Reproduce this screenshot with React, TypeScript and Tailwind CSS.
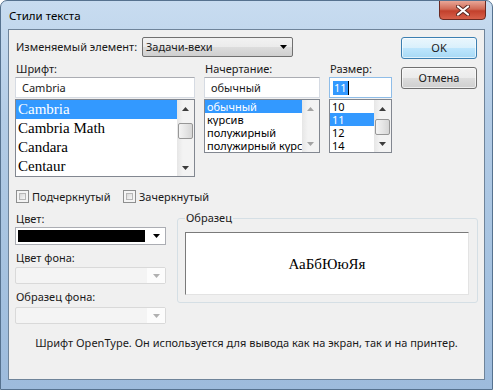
import React from "react";

const Tri = ({ up = false, color = "#000", w = 7, h = 4 }: { up?: boolean; color?: string; w?: number; h?: number }) => (
  <svg width={w} height={h} viewBox={`0 0 ${w} ${h}`}>
    <polygon points={up ? `0,${h} ${w / 2},0 ${w},${h}` : `0,0 ${w},0 ${w / 2},${h}`} fill={color} />
  </svg>
);

const ScrollBar = ({ thumbTop, disabled = false }: { thumbTop?: number; disabled?: boolean }) => (
  <div className="flex w-[17px] shrink-0 flex-col bg-[linear-gradient(to_right,#e6e6e6,#f3f3f3_35%,#f3f3f3)]">
    <div className="flex h-[17px] items-center justify-center">
      <Tri up color={disabled ? "#a3a3a3" : "#3c3c3c"} />
    </div>
    <div className="relative flex-1">
      {thumbTop !== undefined && (
        <div
          className="absolute left-[1px] right-[1px] h-[16px] rounded-[2px] border border-[#979797] bg-[linear-gradient(to_right,#f4f4f4,#e6e6e6_50%,#d6d6d6)]"
          style={{ top: thumbTop }}
        />
      )}
    </div>
    <div className="flex h-[17px] items-center justify-center">
      <Tri color={disabled ? "#a3a3a3" : "#3c3c3c"} />
    </div>
  </div>
);

const ListBox = ({
  items,
  selected,
  itemH,
  className,
  itemClass,
  thumbTop,
  disabled,
}: {
  items: string[];
  selected: number;
  itemH: string;
  className: string;
  itemClass: string;
  thumbTop?: number;
  disabled?: boolean;
}) => (
  <div className={`mt-[1px] flex border border-[#828790] bg-white ${className}`}>
    <div className="min-w-0 flex-1 overflow-hidden">
      {items.map((it, i) => (
        <div
          key={it}
          className={`${itemH} overflow-hidden whitespace-nowrap pl-[2px] ${itemClass} ${
            i === selected ? "bg-[#3399ff] text-white" : "text-black"
          }`}
        >
          {it}
        </div>
      ))}
    </div>
    <ScrollBar thumbTop={thumbTop} disabled={disabled} />
  </div>
);

const TextBox = ({ children, focused = false }: { children: React.ReactNode; focused?: boolean }) => (
  <div
    className={`flex h-[21px] items-center border bg-white pl-[6px] ${
      focused ? "border-[#8fbde8]" : "border-[#d6dbe3] border-t-[#abadb3]"
    }`}
  >
    {children}
  </div>
);

const Check = ({ label }: { label: string }) => (
  <div className="flex items-center gap-[3px]">
    <div className="h-[13px] w-[13px] border border-[#8e8f8f] bg-[#f4f4f4] p-[2px]">
      <div className="h-full w-full border border-[#b6b6b6] bg-[linear-gradient(135deg,#d8d8d8,#f7f7f7)]" />
    </div>
    <span>{label}</span>
  </div>
);

const DisabledCombo = () => (
  <div className="flex h-[17px] rounded-[2px] border border-[#d9d9d9] bg-[#f4f4f4]">
    <div className="flex-1" />
    <div className="flex w-[18px] items-center justify-center bg-[#fcfcfc]">
      <Tri color="#b0b0b0" />
    </div>
  </div>
);

export default function App() {
  return (
    <div className="relative h-[390px] w-[493px] overflow-hidden rounded-t-[7px] border border-[#56728f] bg-[linear-gradient(180deg,#c8dcf0,#b3cce6_30%,#a5c2e0_70%,#9dbbdc)] font-['Noto_Sans',sans-serif] text-[11px] leading-[16px] text-[#1a1a1a]">
      {/* title bar */}
      <div className="flex h-[28px] items-center pl-[8px] pt-[1px] text-[11.5px] text-black">Стили текста</div>

      {/* close button */}
      <div className="absolute right-[6px] top-[-1px] flex h-[20px] w-[47px] items-center justify-center rounded-b-[4px] border border-[#6b2a22] bg-[linear-gradient(180deg,#e9a797,#d06a55_45%,#c2402c_55%,#d7604a)]">
        <svg width="14" height="11" viewBox="0 0 14 11">
          <path d="M2 1.5 L12 9.5 M12 1.5 L2 9.5" stroke="#5a2a24" strokeWidth="4" strokeLinecap="round" />
          <path d="M2 1.5 L12 9.5 M12 1.5 L2 9.5" stroke="#ffffff" strokeWidth="2.2" strokeLinecap="round" />
        </svg>
      </div>

      {/* client area */}
      <div className="mx-[7px] h-[351px] border border-[#6f849a] bg-[#f0f0f0]">
        <div className="pl-[6px] pt-[7px]">
          <div className="flex">
            <div className="w-[377px]">
              {/* element row */}
              <div className="flex h-[20px] items-center">
                <span className="w-[127px] whitespace-nowrap pl-[1px]">Изменяемый элемент:</span>
                <div className="flex h-[20px] w-[151px] items-center justify-between rounded-[2px] border border-[#707070] bg-[linear-gradient(180deg,#f2f2f2,#ebebeb_50%,#dddddd_50%,#cfcfcf)] pl-[3px] pr-[5px]">
                  <span>Задачи-вехи</span>
                  <Tri />
                </div>
              </div>

              {/* font / style / size */}
              <div className="mt-[4px] flex gap-[9px]">
                <div className="w-[180px]">
                  <div className="h-[16px] pl-[1px]">Шрифт:</div>
                  <TextBox>Cambria</TextBox>
                  <ListBox
                    items={["Cambria", "Cambria Math", "Candara", "Centaur"]}
                    selected={0}
                    itemH="h-[19px] leading-[19px]"
                    itemClass="font-['Liberation_Serif',serif] text-[15px]"
                    className="h-[78px]"
                    thumbTop={6}
                  />
                </div>
                <div className="w-[116px]">
                  <div className="h-[16px] pl-[1px]">Начертание:</div>
                  <TextBox>обычный</TextBox>
                  <ListBox
                    items={["обычный", "курсив", "полужирный", "полужирный курсив"]}
                    selected={0}
                    itemH="h-[13px] leading-[13px]"
                    itemClass=""
                    className="h-[54px]"
                    disabled
                  />
                </div>
                <div className="w-[63px]">
                  <div className="h-[16px] pl-[1px]">Размер:</div>
                  <TextBox focused>
                    <span className="-ml-[3px] bg-[#3399ff] px-[1px] leading-[14px] text-white">11</span>
                    <span className="h-[14px] w-[1px] bg-black" />
                  </TextBox>
                  <ListBox
                    items={["10", "11", "12", "14"]}
                    selected={1}
                    itemH="h-[13px] leading-[13px]"
                    itemClass=""
                    className="h-[54px]"
                    thumbTop={2}
                  />
                </div>
              </div>
            </div>

            {/* buttons */}
            <div className="ml-[9px] flex w-[76px] flex-col gap-[8px]">
              <div className="flex h-[22px] items-center justify-center rounded-[3px] border border-[#3c7fb1] bg-[linear-gradient(180deg,#eaf6fd,#d9f0fc_50%,#bee6fd_50%,#a7d9f5)] shadow-[inset_0_0_0_1px_#ffffffa0]">
                OK
              </div>
              <div className="flex h-[22px] items-center justify-center rounded-[3px] border border-[#707070] bg-[linear-gradient(180deg,#f2f2f2,#ebebeb_50%,#dddddd_50%,#cfcfcf)] shadow-[inset_0_0_0_1px_#ffffffa0]">
                Отмена
              </div>
            </div>
          </div>

          {/* checkboxes */}
          <div className="mt-[13px] flex h-[13px] items-center pl-[1px]">
            <div className="w-[107px]">
              <Check label="Подчеркнутый" />
            </div>
            <Check label="Зачеркнутый" />
          </div>

          {/* colours + sample */}
          <div className="mt-[8px] flex">
            <div className="w-[151px]">
              <div className="h-[16px] pl-[1px]">Цвет:</div>
              <div className="flex h-[18px] items-center border border-[#abadb3] bg-white p-[2px] pr-[5px]">
                <div className="h-full flex-1 bg-black" />
                <div className="ml-[8px]">
                  <Tri />
                </div>
              </div>
              <div className="mt-[5px] h-[16px] pl-[1px]">Цвет фона:</div>
              <div className="mt-[1px]">
                <DisabledCombo />
              </div>
              <div className="mt-[5px] h-[16px] pl-[1px]">Образец фона:</div>
              <div className="mt-[2px]">
                <DisabledCombo />
              </div>
            </div>

            <div className="relative ml-[11px] mt-[7px] h-[85px] w-[301px] rounded-[3px] border border-[#d5dfe5]">
              <span className="absolute -top-[9px] left-[7px] bg-[#f0f0f0] px-[1px]">Образец</span>
              <div className="ml-[7px] mt-[13px] flex h-[63px] w-[284px] items-center justify-center border border-[#e3e3e3] border-l-[#7a7a7a] border-t-[#7a7a7a] bg-white font-['Liberation_Serif',serif] text-[15px] text-black">
                АаБбЮюЯя
              </div>
            </div>
          </div>
        </div>

        <div className="mt-[11px] text-center">
          Шрифт OpenType. Он используется для вывода как на экран, так и на принтер.
        </div>
      </div>
    </div>
  );
}
